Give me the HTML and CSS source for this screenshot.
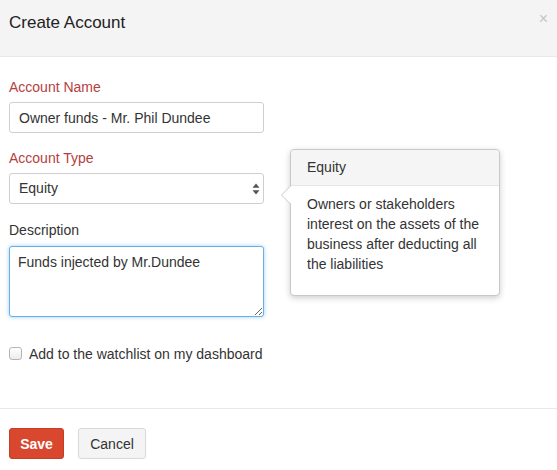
FILE: index.html
```html
<!DOCTYPE html>
<html>
<head>
<meta charset="utf-8">
<link rel="stylesheet" href="styles.css">
</head>
<body>
<div class="modal">
  <div class="modal-header">
    <h1 class="modal-title">Create Account</h1>
    <span class="close">&times;</span>
  </div>
  <div class="modal-body">
    <div class="group">
      <label class="label required">Account Name</label>
      <input class="input" type="text" value="Owner funds - Mr. Phil Dundee">
    </div>
    <div class="group group-wide">
      <label class="label required">Account Type</label>
      <div class="select-wrap">
        <div class="select">Equity</div>
        <svg class="caret" width="8" height="12" viewBox="0 0 8 12"><path d="M4 0.5 L7.5 4.8 L0.5 4.8 Z M4 11.5 L7.5 7.2 L0.5 7.2 Z" fill="#555"/></svg>
      </div>
    </div>
    <div class="group">
      <label class="label label-desc">Description</label>
      <textarea class="textarea">Funds injected by Mr.Dundee</textarea>
    </div>
    <div class="check-row">
      <span class="checkbox"></span>
      <span class="check-label">Add to the watchlist on my dashboard</span>
    </div>
    <div class="popover">
      <div class="popover-arrow"></div>
      <div class="popover-title">Equity</div>
      <div class="popover-content">Owners or stakeholders interest on the assets of the business after deducting all the liabilities</div>
    </div>
  </div>
  <div class="modal-footer">
    <button class="btn btn-primary">Save</button>
    <button class="btn btn-default">Cancel</button>
  </div>
</div>
</body>
</html>
```
FILE: styles.css
```css
* { box-sizing: border-box; }
html, body { margin: 0; padding: 0; background: #fff; }
body {
  font-family: "Liberation Sans", Arial, sans-serif;
  font-size: 14px;
  color: #333;
  width: 557px;
  height: 470px;
  overflow: hidden;
}
.modal { width: 557px; }
.modal-header {
  height: 57px;
  background: #f4f4f4;
  border-bottom: 1px solid #e8e8e8;
  padding: 13px 9px 0 9px;
  position: relative;
}
.modal-title {
  margin: 0;
  font-size: 17px;
  font-weight: normal;
  line-height: 20px;
  color: #222;
}
.close {
  position: absolute;
  right: 9px;
  top: 9px;
  font-size: 16px;
  line-height: 20px;
  color: #c4c4c4;
}
.modal-body {
  position: relative;
  padding: 20px 9px 0 9px;
  height: 352px;
  border-bottom: 1px solid #e8e8e8;
}
.group { width: 255px; margin-bottom: 15px; }
.group-wide { margin-bottom: 16px; }
.label {
  display: block;
  line-height: 20px;
  margin-bottom: 5px;
  color: #333;
}
.label-desc { margin-bottom: 6px; }
.label.required { color: #b5413d; }
.input, .select, .textarea {
  display: block;
  width: 255px;
  font-family: "Liberation Sans", Arial, sans-serif;
  font-size: 14px;
  color: #333;
  border: 1px solid #cfcfcf;
  border-radius: 3px;
  background: #fff;
  margin: 0;
  outline: none;
}
.input { height: 31px; padding: 0 9px; }
.select-wrap { position: relative; }
.select { height: 31px; line-height: 29px; padding: 0 9px; }
.caret { position: absolute; right: 4px; top: 10px; }
.textarea {
  height: 71px;
  padding: 5px 8px;
  line-height: 20px;
  border-color: #66afe9;
  box-shadow: 0 0 4px rgba(102, 175, 233, 0.6);
  resize: vertical;
}
.check-row {
  display: flex;
  align-items: center;
  margin-top: 30px;
  height: 13px;
}
.checkbox {
  width: 13px;
  height: 13px;
  border: 1px solid #b5b5b5;
  border-radius: 3px;
  background: linear-gradient(#fff, #ececec);
  margin-right: 7px;
}
.check-label { line-height: 20px; color: #333; }
.popover {
  position: absolute;
  left: 290px;
  top: 92px;
  width: 210px;
  height: 147px;
  background: #fff;
  border: 1px solid #c8c8c8;
  border-radius: 4px;
  box-shadow: 0 2px 6px rgba(0, 0, 0, 0.2);
}
.popover-arrow {
  position: absolute;
  left: -10px;
  top: 35px;
  width: 0;
  height: 0;
  border-top: 10px solid transparent;
  border-bottom: 10px solid transparent;
  border-right: 10px solid #c8c8c8;
}
.popover-arrow::after {
  content: "";
  position: absolute;
  left: 1px;
  top: -9px;
  border-top: 9px solid transparent;
  border-bottom: 9px solid transparent;
  border-right: 9px solid #fff;
}
.popover-title {
  height: 36px;
  background: #f5f5f5;
  border-bottom: 1px solid #e6e6e6;
  border-radius: 4px 4px 0 0;
  padding: 7px 16px 0 16px;
  line-height: 20px;
  color: #333;
}
.popover-content {
  padding: 8px 16px 0 16px;
  line-height: 20px;
  color: #333;
}
.modal-footer {
  padding: 19px 9px 0 9px;
  display: flex;
  gap: 14px;
}
.btn {
  height: 31px;
  font-family: "Liberation Sans", Arial, sans-serif;
  font-size: 14px;
  border-radius: 3px;
  margin: 0;
}
.btn-primary {
  width: 55px;
  background: #d8472e;
  border: 1px solid #c63d25;
  color: #fff;
  font-weight: bold;
}
.btn-default {
  width: 68px;
  background: #f4f4f4;
  border: 1px solid #d9d9d9;
  color: #333;
}
```
